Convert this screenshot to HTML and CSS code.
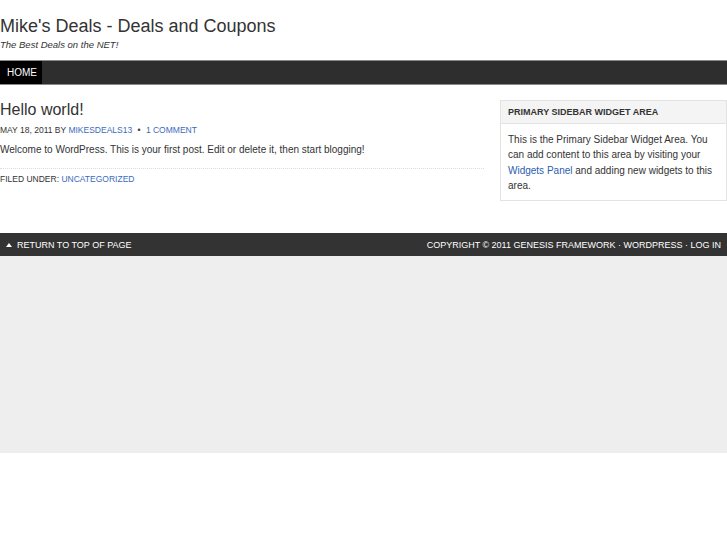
FILE: index.html
```html
<!DOCTYPE html>
<html>
<head>
<meta charset="utf-8">
<link rel="stylesheet" href="styles.css">
</head>
<body>
<div class="wrap">
  <div class="header">
    <h1 class="title">Mike's Deals - Deals and Coupons</h1>
    <p class="desc">The Best Deals on the NET!</p>
  </div>
  <div class="nav">
    <a class="nav-item current">HOME</a>
  </div>
  <div class="inner">
    <div class="content">
      <div class="post">
        <h2 class="post-title">Hello world!</h2>
        <div class="post-info">MAY 18, 2011 BY <a class="link">MIKESDEALS13</a> <span class="dot">&bull;</span> <a class="link">1 COMMENT</a></div>
        <p class="entry">Welcome to WordPress. This is your first post. Edit or delete it, then start blogging!</p>
        <div class="post-meta">FILED UNDER: <a class="link">UNCATEGORIZED</a></div>
      </div>
    </div>
    <div class="sidebar">
      <div class="widget">
        <h4 class="widget-title">PRIMARY SIDEBAR WIDGET AREA</h4>
        <p class="widget-text">This is the Primary Sidebar Widget Area. You can add content to this area by visiting your <a class="blue">Widgets Panel</a> and adding new widgets to this area.</p>
      </div>
    </div>
  </div>
  <div class="footer">
    <div class="gototop"><span class="arrow"></span>RETURN TO TOP OF PAGE</div>
    <div class="creds">COPYRIGHT &copy; 2011 GENESIS FRAMEWORK &middot; WORDPRESS &middot; LOG IN</div>
  </div>
  <div class="bottom"></div>
</div>
</body>
</html>
```

FILE: styles.css
```css
html, body {
  margin: 0;
  padding: 0;
  background: #fff;
}
body {
  font-family: "Liberation Sans", Arial, sans-serif;
  color: #333;
}
.header {
  height: 60px;
  padding-top: 14px;
  box-sizing: border-box;
}
.title {
  margin: 0;
  font-size: 18px;
  font-weight: normal;
  line-height: 24px;
  color: #333;
}
.desc {
  margin: 1px 0 0;
  font-size: 9.5px;
  font-style: italic;
  color: #333;
  line-height: 12px;
}
.nav {
  height: 25px;
  background: #2e2e2e;
  border-top: 1px solid #8a8a8a;
  border-bottom: 1px solid #8a8a8a;
  box-sizing: border-box;
  display: flex;
}
.nav-item {
  background: #000;
  color: #fff;
  font-size: 10px;
  padding: 0 7px;
  line-height: 23px;
  width: 42px;
  box-sizing: border-box;
}
.inner {
  display: flex;
  justify-content: space-between;
  padding-top: 15px;
  height: 148px;
  box-sizing: border-box;
}
.content {
  width: 484px;
}
.post-title {
  margin: 0;
  font-size: 16px;
  font-weight: normal;
  line-height: 20px;
  color: #333;
}
.post-info {
  margin-top: 4px;
  font-size: 8.5px;
  line-height: 12px;
  color: #333;
}
.link {
  color: #3a6bbd;
}
.dot {
  margin: 0 3px;
}
.entry {
  margin: 7px 0 0;
  font-size: 10px;
  line-height: 14px;
  padding-bottom: 11px;
  border-bottom: 1px dotted #ddd;
}
.post-meta {
  margin-top: 4px;
  font-size: 8.5px;
  line-height: 12px;
}
.sidebar {
  width: 227px;
}
.widget {
  border: 1px solid #e3e3e3;
  box-sizing: border-box;
  width: 227px;
}
.widget-title {
  margin: 0;
  background: #f4f4f4;
  border-bottom: 1px solid #e3e3e3;
  font-size: 9px;
  font-weight: bold;
  line-height: 22px;
  padding: 0 7px;
  color: #333;
}
.widget-text {
  margin: 0;
  padding: 8px 7px 7px;
  font-size: 10px;
  line-height: 15.3px;
}
.blue {
  color: #2a5db0;
}
.footer {
  height: 23px;
  background: #333;
  color: #fff;
  display: flex;
  justify-content: space-between;
  align-items: center;
  font-size: 9px;
  padding: 0 6px;
}
.gototop {
  display: flex;
  align-items: center;
}
.arrow {
  width: 0;
  height: 0;
  border-left: 3.5px solid transparent;
  border-right: 3.5px solid transparent;
  border-bottom: 4px solid #fff;
  margin-right: 5px;
}
.bottom {
  height: 197px;
  background: #eee;
}
```
